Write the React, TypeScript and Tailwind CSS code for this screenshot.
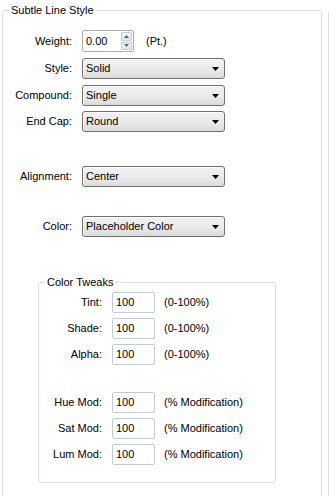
import React from "react";

const font = "font-['Tahoma','Liberation_Sans',Arial,sans-serif]";

function Dropdown({ value }: { value: string }) {
  return (
    <div className="relative flex h-[21px] w-[143px] items-center rounded-[3px] border border-[#707070] bg-gradient-to-b from-[#f2f2f2] via-[#ebebeb] to-[#dbdbdb] pl-[3px] shadow-[inset_1px_1px_0_#fff]">
      <span className="text-[11px] leading-none text-black">{value}</span>
      <svg className="absolute right-[5px] top-[8px]" width="7" height="4" viewBox="0 0 7 4">
        <path d="M0 0h7L3.5 4z" fill="#000" />
      </svg>
    </div>
  );
}

function Row({ label, children, className = "" }: { label: string; children: React.ReactNode; className?: string }) {
  return (
    <div className={`flex items-center ${className}`}>
      <span className="w-[79px] pr-[10px] text-right text-[11px] text-black">{label}</span>
      {children}
    </div>
  );
}

function TweakRow({ label, hint, className = "" }: { label: string; hint: string; className?: string }) {
  return (
    <div className={`flex items-center ${className}`}>
      <span className="w-[63px] text-right text-[11px] text-black">{label}</span>
      <div className="ml-[10px] flex h-[21px] w-[43px] items-center rounded-[2px] border border-[#c5cdd4] bg-white pl-[3px] text-[11px] text-black">
        100
      </div>
      <span className="ml-[9px] text-[11px] text-black">{hint}</span>
    </div>
  );
}

export default function App() {
  return (
    <div className={`flex h-[496px] w-[329px] overflow-hidden bg-white ${font}`}>
      <div className="relative ml-[2px] mt-[10px] h-[500px] w-[320px] shrink-0 rounded-[3px] border border-[#d5dfe5]">
        <span className="absolute left-[6px] top-[-8px] bg-white px-[2px] text-[11px] leading-[14px] text-black">
          Subtle Line Style
        </span>

        <div className="flex flex-col pt-[19px]">
          <Row label="Weight:">
            <div className="flex h-[22px] w-[52px] items-center justify-between rounded-[2px] border border-[#abadb3] bg-white pl-[3px] pr-[1px]">
              <span className="text-[11px] text-black">0.00</span>
              <div className="flex h-[18px] w-[11px] flex-col gap-[1px]">
                <div className="flex flex-1 items-center justify-center rounded-[1px] border border-[#c9ced4] bg-gradient-to-b from-[#f7f8f9] to-[#e3e6ea]">
                  <svg width="5" height="3" viewBox="0 0 5 3"><path d="M0 3h5L2.5 0z" fill="#4d6185" /></svg>
                </div>
                <div className="flex flex-1 items-center justify-center rounded-[1px] border border-[#c9ced4] bg-gradient-to-b from-[#f7f8f9] to-[#e3e6ea]">
                  <svg width="5" height="3" viewBox="0 0 5 3"><path d="M0 0h5L2.5 3z" fill="#4d6185" /></svg>
                </div>
              </div>
            </div>
            <span className="ml-[12px] text-[11px] text-black">(Pt.)</span>
          </Row>
          <Row label="Style:" className="mt-[6px]">
            <Dropdown value="Solid" />
          </Row>
          <Row label="Compound:" className="mt-[6px]">
            <Dropdown value="Single" />
          </Row>
          <Row label="End Cap:" className="mt-[5px]">
            <Dropdown value="Round" />
          </Row>
          <Row label="Alignment:" className="mt-[34px]">
            <Dropdown value="Center" />
          </Row>
          <Row label="Color:" className="mt-[29px]">
            <Dropdown value="Placeholder Color" />
          </Row>

          <div className="relative ml-[35px] mt-[45px] h-[201px] w-[238px] rounded-[3px] border border-[#d5dfe5]">
            <span className="absolute left-[6px] top-[-8px] bg-white px-[2px] text-[11px] leading-[14px] text-black">
              Color Tweaks
            </span>
            <div className="flex flex-col pt-[9px]">
              <TweakRow label="Tint:" hint="(0-100%)" />
              <TweakRow label="Shade:" hint="(0-100%)" className="mt-[5px]" />
              <TweakRow label="Alpha:" hint="(0-100%)" className="mt-[5px]" />
              <TweakRow label="Hue Mod:" hint="(% Modification)" className="mt-[27px]" />
              <TweakRow label="Sat Mod:" hint="(% Modification)" className="mt-[5px]" />
              <TweakRow label="Lum Mod:" hint="(% Modification)" className="mt-[5px]" />
            </div>
          </div>
        </div>
      </div>
      <div className="ml-[6px] mt-[12px] h-[490px] w-px shrink-0 bg-[#d5dfe5]" />
    </div>
  );
}
